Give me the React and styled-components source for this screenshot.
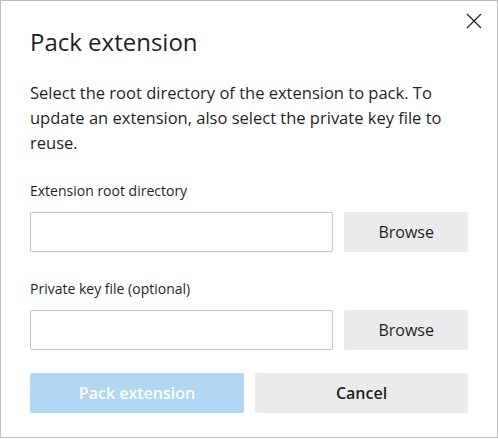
import styled, { createGlobalStyle } from "styled-components";

const GlobalStyle = createGlobalStyle`
  html, body {
    margin: 0;
    padding: 0;
    background: #ffffff;
  }
  body {
    font-family: "Open Sans", "Noto Sans", "Liberation Sans", sans-serif;
    color: #1f1f1f;
  }
`;

const Dialog = styled.div`
  position: relative;
  box-sizing: border-box;
  width: 498px;
  height: 438px;
  border: 1px solid #bfbfbf;
  padding: 24px 29px 0 29px;
  display: flex;
  flex-direction: column;
`;

const Close = styled.button`
  position: absolute;
  top: 8px;
  right: 11px;
  width: 24px;
  height: 24px;
  padding: 0;
  border: none;
  background: transparent;
  display: flex;
  align-items: center;
  justify-content: center;
  color: #1f1f1f;
`;

const Title = styled.h1`
  margin: 0;
  font-size: 24px;
  font-weight: 400;
  line-height: 34px;
`;

const Description = styled.p`
  margin: 21px 0 0 0;
  font-size: 16.5px;
  line-height: 25px;
`;

const Label = styled.label`
  display: block;
  margin-top: ${(p) => p.$top}px;
  font-size: 14px;
  line-height: 18px;
`;

const Row = styled.div`
  display: flex;
  gap: 11px;
  margin-top: ${(p) => p.$top}px;
`;

const Field = styled.input`
  box-sizing: border-box;
  width: 304px;
  height: 40px;
  border: 1px solid #c4c4c4;
  border-radius: 2px;
  outline: none;
  padding: 0 10px;
  font: inherit;
`;

const Button = styled.button`
  box-sizing: border-box;
  width: ${(p) => p.$width}px;
  height: 40px;
  border: none;
  border-radius: 2px;
  background: ${(p) => (p.$primary ? "#b3d6f2" : "#ebebeb")};
  color: ${(p) => (p.$primary ? "#ffffff" : "#1f1f1f")};
  font-family: inherit;
  font-size: 16px;
  font-weight: ${(p) => (p.$bold ? 600 : 400)};
  padding: 0;
`;

const CloseIcon = () => (
  <svg width="16" height="16" viewBox="0 0 16 16">
    <path d="M1 1 L15 15 M15 1 L1 15" stroke="#1f1f1f" strokeWidth="1.2" fill="none" />
  </svg>
);

const App = () => {
  return (
    <>
      <GlobalStyle />
      <Dialog>
        <Close aria-label="Close">
          <CloseIcon />
        </Close>
        <Title>Pack extension</Title>
        <Description>
          Select the root directory of the extension to pack. To update an
          extension, also select the private key file to reuse.
        </Description>
        <Label $top={27}>Extension root directory</Label>
        <Row $top={12}>
          <Field />
          <Button $width={124}>Browse</Button>
        </Row>
        <Label $top={28}>Private key file (optional)</Label>
        <Row $top={12}>
          <Field />
          <Button $width={124}>Browse</Button>
        </Row>
        <Row $top={23}>
          <Button $width={215} $primary $bold>
            Pack extension
          </Button>
          <Button $width={214} $bold>
            Cancel
          </Button>
        </Row>
      </Dialog>
    </>
  );
};

export default App;
